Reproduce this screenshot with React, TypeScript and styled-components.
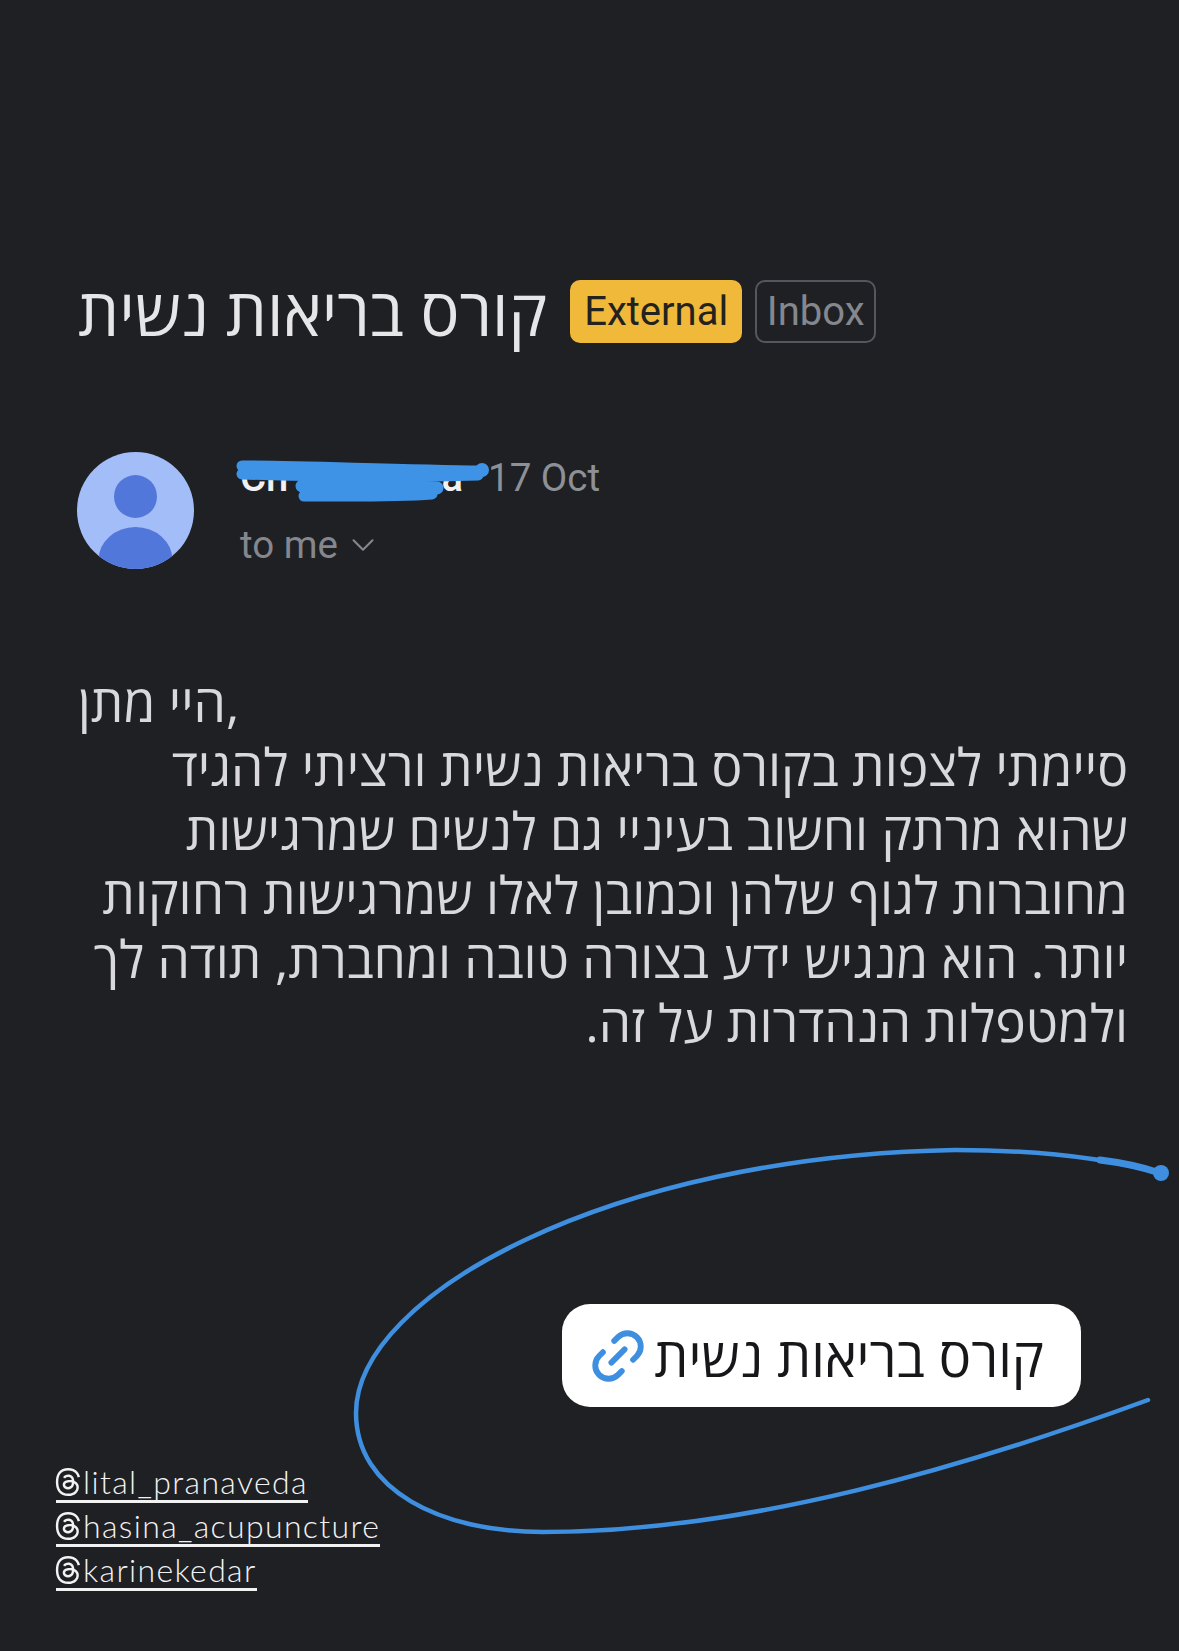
import React from 'react';
import styled, { createGlobalStyle } from 'styled-components';
import { ChevronDown } from 'lucide-react';
import { FaThreads } from 'react-icons/fa6';

const GlobalStyle = createGlobalStyle`
  html, body { margin: 0; padding: 0; background: #1f2024; }
`;

const Page = styled.div`
  position: relative;
  width: 1179px;
  height: 1651px;
  overflow: hidden;
  box-sizing: border-box;
  padding: 280px 51px 0 78px;
  background: #1f2024;
  font-family: Roboto, "Open Sans", sans-serif;
  display: flex;
  flex-direction: column;
`;

const TitleRow = styled.div`
  display: flex;
  align-items: center;
  height: 63px;
`;

const Title = styled.h1`
  margin: 0 23px 0 0;
  font: 400 65px/63px "Open Sans", sans-serif;
  color: #e6e6e8;
  direction: rtl;
`;

const Badge = styled.span<{ $external?: boolean }>`
  box-sizing: border-box;
  height: 63px;
  display: flex;
  align-items: center;
  justify-content: center;
  border-radius: 10px;
  font: 400 40px/1 Roboto, sans-serif;
  width: ${p => (p.$external ? '172px' : '121px')};
  margin-right: ${p => (p.$external ? '13px' : '0')};
  background: ${p => (p.$external ? '#f0b93a' : 'transparent')};
  color: ${p => (p.$external ? '#23221f' : '#84878d')};
  border: ${p => (p.$external ? 'none' : '2px solid #54575d')};
`;

const SenderRow = styled.div`
  display: flex;
  align-items: center;
  margin: 109px 0 0 -1px;
  gap: 46px;
`;

const Avatar = styled.svg`
  width: 117px;
  height: 117px;
  flex: none;
`;

const SenderInfo = styled.div`
  display: flex;
  flex-direction: column;
  gap: 27px;
  padding-top: 2px;
`;

const NameRow = styled.div`
  position: relative;
  display: flex;
  align-items: center;
  height: 40px;
`;

const Name = styled.span`
  display: flex;
  justify-content: space-between;
  width: 223px;
  margin-right: 25px;
  font: 500 40px/40px Roboto, sans-serif;
  color: #f1f1f3;
`;

const DateText = styled.span`
  font: 400 38.5px/40px Roboto, sans-serif;
  color: #8d9096;
`;

const Scribble = styled.svg`
  position: absolute;
  left: -8px;
  top: -4px;
  width: 260px;
  height: 56px;
`;

const ToMe = styled.div`
  display: flex;
  align-items: center;
  gap: 6px;
  height: 40px;
  font: 400 38.5px/40px Roboto, sans-serif;
  color: #84878d;
`;

const Message = styled.div`
  margin-top: 101px;
  font: 400 51.5px/64px "Open Sans", sans-serif;
  color: #d9d9dd;
`;

const Greeting = styled.div`
  width: fit-content;
  direction: ltr;
`;

const Line = styled.div`
  direction: rtl;
  text-align: right;
  white-space: nowrap;
`;

const LinkCard = styled.div`
  align-self: flex-end;
  box-sizing: border-box;
  width: 519px;
  height: 103px;
  margin: 250px 47px 0 0;
  padding: 0 37px 0 24px;
  display: flex;
  align-items: center;
  justify-content: space-between;
  background: #fff;
  border-radius: 28px;
`;

const LinkIcon = styled.svg`
  width: 64px;
  height: 64px;
  flex: none;
`;

const LinkText = styled.span`
  font: 400 54px/1 "Open Sans", sans-serif;
  color: #17171a;
  direction: rtl;
`;

const Handles = styled.div`
  display: flex;
  flex-direction: column;
  align-items: flex-start;
  gap: 5px;
  margin: 57px 0 0 -22px;
`;

const Handle = styled.div`
  display: flex;
  align-items: center;
  height: 36px;
  border-bottom: 3px solid #f2f2f2;
  font: 300 32px/36px Lato, sans-serif;
  letter-spacing: 1.35px;
  color: #f2f2f2;
`;

const ThreadsMark = styled(FaThreads)`
  width: 30px;
  height: 30px;
  margin-left: -3px;
`;

const Annotation = styled.svg`
  position: absolute;
  left: 0;
  top: 0;
  width: 1179px;
  height: 1651px;
  pointer-events: none;
`;

const handles = ['lital_pranaveda', 'hasina_acupuncture', 'karinekedar'];

const blue = '#3f8fe0';

const curve =
  'M1148 1400 C970 1465 750 1532 543 1532 C440 1532 356 1490 356 1413 C356 1295 610 1156 955 1150 C1040 1150 1105 1158 1160 1173';

export default function App() {
  return (
    <>
      <GlobalStyle />
      <Page>
        <TitleRow>
          <Title>קורס בריאות נשית</Title>
          <Badge $external>External</Badge>
          <Badge>Inbox</Badge>
        </TitleRow>

        <SenderRow>
          <Avatar viewBox="0 0 117 117">
            <defs>
              <clipPath id="avatarClip">
                <circle cx="58.5" cy="58.5" r="58.5" />
              </clipPath>
            </defs>
            <circle cx="58.5" cy="58.5" r="58.5" fill="#a3bdf8" />
            <g clipPath="url(#avatarClip)" fill="#5177da">
              <circle cx="58.5" cy="44.5" r="21.5" />
              <ellipse cx="58.5" cy="108" rx="37" ry="33" />
            </g>
          </Avatar>
          <SenderInfo>
            <NameRow>
              <Name>
                <span>Ch</span>
                <span>a</span>
              </Name>
              <DateText>17 Oct</DateText>
              <Scribble viewBox="0 0 260 56">
                <g fill="none" stroke="#3f93e6" strokeLinecap="round">
                  <path d="M10 12 C70 12 160 16 250 17" strokeWidth="11" />
                  <path d="M10 20 C80 22 160 24 246 21" strokeWidth="11" />
                  <path d="M70 32 C110 30 160 32 205 34" strokeWidth="13" />
                  <path d="M72 42 C110 42 160 43 200 40" strokeWidth="11" />
                </g>
                <circle cx="250" cy="16" r="7" fill="#3f93e6" />
              </Scribble>
            </NameRow>
            <ToMe>
              to me
              <ChevronDown size={38} strokeWidth={1.3} />
            </ToMe>
          </SenderInfo>
        </SenderRow>

        <Message>
          <Greeting>היי מתן,</Greeting>
          <Line>סיימתי לצפות בקורס בריאות נשית ורציתי להגיד</Line>
          <Line>שהוא מרתק וחשוב בעיניי גם לנשים שמרגישות</Line>
          <Line>מחוברות לגוף שלהן וכמובן לאלו שמרגישות רחוקות</Line>
          <Line>יותר. הוא מנגיש ידע בצורה טובה ומחברת, תודה לך</Line>
          <Line>ולמטפלות הנהדרות על זה.</Line>
        </Message>

        <LinkCard>
          <LinkIcon viewBox="0 0 24 24" fill="none" stroke={blue} strokeWidth="2.2" strokeLinecap="round">
            <g transform="rotate(-45 12 12)">
              <path d="M9 17H7A5 5 0 0 1 7 7h2" />
              <path d="M15 7h2a5 5 0 1 1 0 10h-2" />
              <line x1="8.5" y1="12" x2="15.5" y2="12" />
            </g>
          </LinkIcon>
          <LinkText>קורס בריאות נשית</LinkText>
        </LinkCard>

        <Handles>
          {handles.map(h => (
            <Handle key={h}>
              <ThreadsMark />
              {h}
            </Handle>
          ))}
        </Handles>

        <Annotation viewBox="0 0 1179 1651">
          <path d={curve} fill="none" stroke={blue} strokeWidth="4.5" strokeLinecap="round" />
          <path d="M1100 1160 C1125 1163 1145 1168 1160 1173" fill="none" stroke={blue} strokeWidth="7" strokeLinecap="round" />
          <circle cx="1161" cy="1173" r="8" fill={blue} />
        </Annotation>
      </Page>
    </>
  );
}
